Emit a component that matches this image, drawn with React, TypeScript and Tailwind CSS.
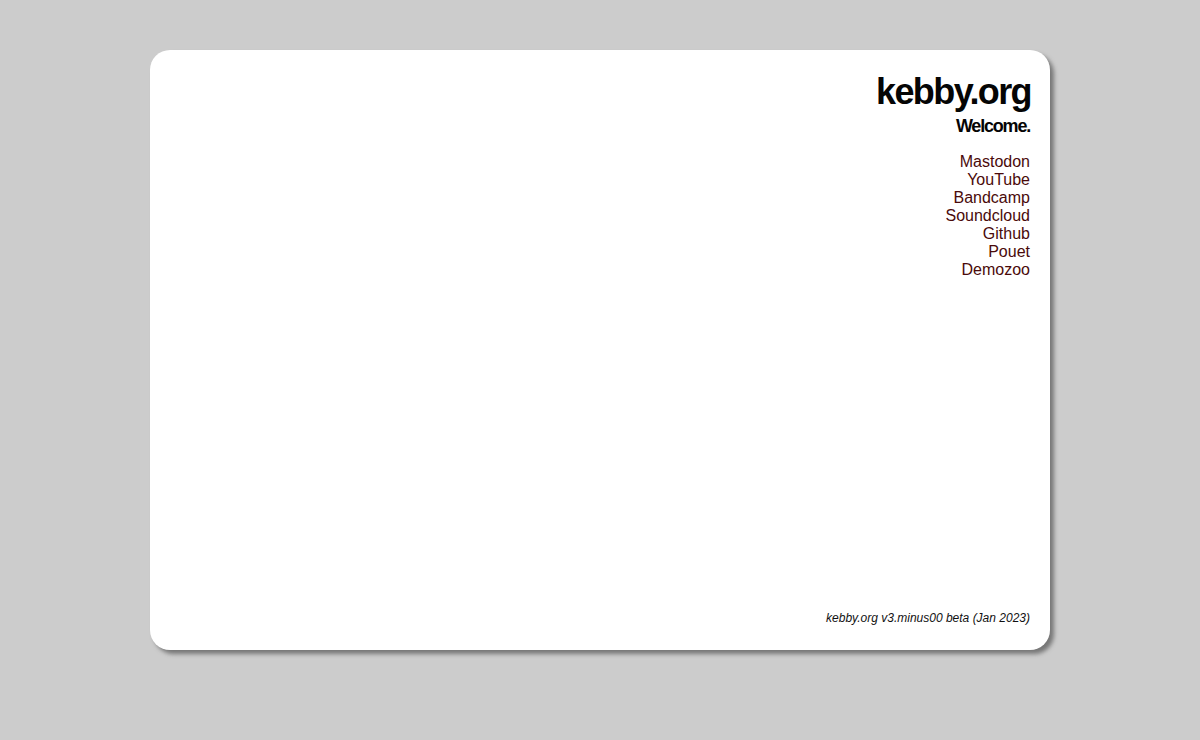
const LINKS = ["Mastodon", "YouTube", "Bandcamp", "Soundcloud", "Github", "Pouet", "Demozoo"];

export default function App() {
  return (
    <div className="min-h-screen bg-[#cccccc] pt-[50px] font-['Liberation_Sans',Arial,sans-serif]">
      <div className="mx-auto flex h-[600px] w-[900px] flex-col items-end rounded-[20px] bg-white pt-[24px] pr-[20px] pb-[25px] shadow-[4px_4px_4px_#777]">
        <h1 className="mr-[-1px] text-[36px] font-bold leading-[36px] tracking-[-1.6px] text-[#050505]">kebby.org</h1>
        <h2 className="mt-[7px] text-[18px] font-bold leading-[18px] tracking-[-1.2px] text-[#050505]">Welcome.</h2>
        <nav className="mt-[18px] flex flex-col items-end text-[16px] leading-[18px]">
          {LINKS.map((l) => (
            <a key={l} href="#" className="text-[#4a0a0a]">
              {l}
            </a>
          ))}
        </nav>
        <p className="mt-auto text-[12px] italic leading-[14px] text-[#111]">kebby.org v3.minus00 beta (Jan 2023)</p>
      </div>
    </div>
  );
}
